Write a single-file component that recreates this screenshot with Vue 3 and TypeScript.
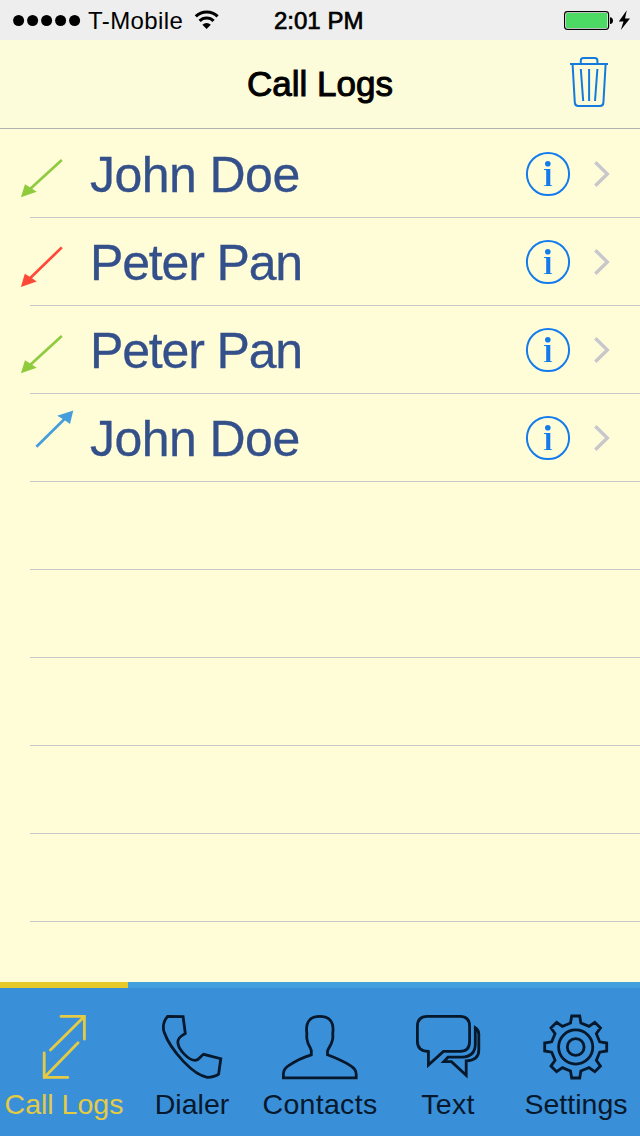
<script setup lang="ts">
type CallKind = 'incoming' | 'missed' | 'outgoing'

interface CallEntry {
  name: string
  kind: CallKind
}

interface Tab {
  id: string
  label: string
}

const calls: CallEntry[] = [
  { name: 'John Doe', kind: 'incoming' },
  { name: 'Peter Pan', kind: 'missed' },
  { name: 'Peter Pan', kind: 'incoming' },
  { name: 'John Doe', kind: 'outgoing' },
]

const emptyRows = 5

const tabs: Tab[] = [
  { id: 'logs', label: 'Call Logs' },
  { id: 'dialer', label: 'Dialer' },
  { id: 'contacts', label: 'Contacts' },
  { id: 'text', label: 'Text' },
  { id: 'settings', label: 'Settings' },
]

const activeTab = 'logs'

// Outline of the eight-toothed settings wheel, centred on (63.7, 59).
function gearPath(): string {
  const tooth: [number, number][] = [
    [-9.3, -22.3],
    [-5.2, -24],
    [-4, -31],
    [4, -31],
    [5.2, -24],
  ]
  const points: string[] = []
  for (let i = 0; i < 8; i++) {
    const a = (i * Math.PI) / 4
    for (const [x, y] of tooth) {
      const px = 63.7 + x * Math.cos(a) - y * Math.sin(a)
      const py = 59 + x * Math.sin(a) + y * Math.cos(a)
      points.push(`${px.toFixed(2)} ${py.toFixed(2)}`)
    }
  }
  return `M${points.join('L')}Z`
}

const gear = gearPath()
</script>

<template>
  <div class="screen">
    <div class="status">
      <div class="carrier">
        <svg class="dots" width="68" height="40" viewBox="0 0 68 40">
          <circle v-for="n in 5" :key="n" :cx="5.6 + (n - 1) * 14" cy="20.5" r="5.5" />
        </svg>
        <span class="network">T-Mobile</span>
        <svg class="wifi" width="26" height="40" viewBox="194 0 26 40">
          <path d="M195.8 16.4a15.4 15.4 0 0 1 21.8 0" />
          <path d="M199.6 20.9a9.8 9.8 0 0 1 14 0" />
          <path class="solid" d="M202.4 24.8a5.8 5.8 0 0 1 8.4 0L206.6 29Z" />
        </svg>
      </div>
      <span class="time">2:01 PM</span>
      <svg class="battery" width="76" height="40" viewBox="564 0 76 40">
        <rect class="case" x="564.6" y="11.6" width="44" height="17.8" rx="2.8" />
        <rect class="charge" x="566" y="13" width="41.4" height="15" rx="1" />
        <path d="M610 17.2c4 0 4 6.8 0 6.8Z" />
        <path d="M626.8 10.2L618.8 21.4H623.5L620.8 30L630 18.6H625Z" />
      </svg>
    </div>

    <header class="header">
      <h1>Call Logs</h1>
      <svg class="trash" width="60" height="88" viewBox="560 40 60 88">
        <path d="M570 64H608" />
        <path d="M580.8 63V60.6Q580.8 58 583.4 58H594.8Q597.4 58 597.4 60.6V63" />
        <path d="M572.6 64.5L574.8 102.6Q575 106 578.4 106H600Q603.2 106 603.4 102.6L605.6 64.5" />
        <path d="M580.8 69L583.2 101M589.1 69V101M597.4 69L595 101" />
      </svg>
    </header>

    <main class="list">
      <div v-for="(call, i) in calls" :key="i" class="row">
        <svg class="direction" :class="call.kind" width="84" height="88" viewBox="0 0 84 88">
          <template v-if="call.kind === 'outgoing'">
            <path class="shaft" d="M36.4 52.8L65.8 23.8" />
            <path class="tip" d="M73.3 16.5L70 29.9L63.8 25.6L57.2 21.8Z" />
          </template>
          <template v-else-if="call.kind === 'missed'">
            <path class="shaft" d="M61.8 29.4L29 61.3" />
            <path class="tip" d="M20.9 68.9L24.8 55.8L31 59.6L36.7 63.6Z" />
          </template>
          <template v-else>
            <path class="shaft" d="M61.8 30L29 60" />
            <path class="tip" d="M20.9 67.3L25 54.2L31 58L36.7 61.7Z" />
          </template>
        </svg>
        <div class="line">
          <span class="name" :class="{ tight: call.name === 'Peter Pan' }">{{ call.name }}</span>
          <svg class="info" width="46" height="46" viewBox="0 0 46 46">
            <circle class="ring" cx="23" cy="23" r="21.1" />
            <circle class="mark" cx="22.8" cy="12.7" r="2.8" />
            <path class="mark" d="M18.9 18H25.3V34.1L27.2 34.4V35.1H18.9V34.4L21.2 34.1V19.2L18.9 18.7Z" />
          </svg>
          <svg class="chevron" width="20" height="32" viewBox="0 0 20 32">
            <path d="M2.3 4.3L14.3 16L2.3 27.7" />
          </svg>
        </div>
      </div>
      <div v-for="n in emptyRows" :key="'e' + n" class="row">
        <div class="line"></div>
      </div>
    </main>

    <nav class="tabs">
      <div v-for="tab in tabs" :key="tab.id" class="tab" :class="[tab.id, { active: tab.id === activeTab }]">
        <svg width="128" height="96" viewBox="0 0 128 96">
          <template v-if="tab.id === 'logs'">
            <path d="M61 28.4H84.4V51.2M84.4 28.4L50.5 62" />
            <path d="M44.2 65V89.4H67.8M44.2 89.4L78.1 54.8" />
          </template>
          <path
            v-else-if="tab.id === 'dialer'"
            d="M39.6 28.4L55.1 28.6L57.3 45.5C51.5 48.5 49.3 51 50 55.5C51 62 60.5 72.4 67.2 72.4C71.5 72.2 72.5 67.8 75.6 66.3L92.8 70.7L90.6 86.2C87.7 88.4 84 89.3 79.3 89.3C72.2 88.2 63 81.4 55.4 73.4C46.7 64 39.2 53.2 36.2 44.3C34.2 38 35.3 33.5 39.6 28.4Z"
          />
          <path
            v-else-if="tab.id === 'contacts'"
            d="M27.4 89.8V86C27.4 82.4 29.3 79.7 32.6 77.6C39.7 72.8 46 69.5 55.3 66.8V62.4C53.8 58 51.8 56.4 51.4 52.8C50 50 51.3 47 50.6 43C50 33.5 54.5 28.3 63.8 28.3S77.6 33.5 77 43C76.3 47 77.6 50 76.2 52.8C75.6 56.4 73.2 58.6 71.5 63V66.8C81 70.4 87.8 73.4 94.4 77.6C97.8 79.7 100.2 82.4 100.2 86V89.8Z"
          />
          <template v-else-if="tab.id === 'text'">
            <path
              d="M43.4 28.4H76Q85.6 28.4 85.6 38.4V53.5Q85.6 63.4 76 63.4H59.4L44.4 77V63.5Q33.4 63 33.4 53.5V38.4Q33.4 28.4 43.4 28.4Z"
            />
            <path
              d="M91.3 39.8Q94.8 42 94.8 46V62Q94.8 72.5 82.2 72.8V87.2L67.5 73.6H59.8L64 69.2H78Q91.3 68.5 91.3 56Z"
            />
          </template>
          <template v-else>
            <path :d="gear" />
            <circle cx="63.7" cy="59" r="17.1" />
            <circle cx="63.7" cy="59" r="8.4" />
          </template>
        </svg>
        <span class="label">{{ tab.label }}</span>
      </div>
    </nav>
  </div>
</template>

<style>
body {
  margin: 0;
}
</style>

<style scoped>
.screen {
  display: flex;
  flex-direction: column;
  width: 640px;
  height: 1136px;
  overflow: hidden;
  background: #fffcd8;
  font-family: 'Liberation Sans', Arial, sans-serif;
  color: #000;
}

svg {
  display: block;
  flex: none;
}

.status {
  display: grid;
  grid-template-columns: 274px 1fr 76px;
  height: 40px;
  background: #eeeeee;
  font-size: 24px;
  line-height: 42px;
}

.carrier {
  display: flex;
  padding-left: 13px;
}

.network {
  width: 106px;
  margin-left: 7px;
  letter-spacing: 0.4px;
  white-space: nowrap;
}

.wifi path {
  fill: none;
  stroke: #000;
  stroke-width: 3;
}

.wifi .solid {
  fill: #000;
  stroke: none;
}

.time {
  -webkit-text-stroke: 0.7px #000;
}

.battery .case {
  fill: #fff;
  stroke: #000;
  stroke-width: 1.2;
}

.battery .charge {
  fill: #4cd964;
}

.header {
  display: grid;
  grid-template-columns: 80px 1fr 80px;
  height: 88px;
  border-bottom: 1px solid #b2b2b5;
  background: #fcfbda;
}

h1 {
  grid-column: 2;
  margin: 0;
  font-size: 35px;
  font-weight: 400;
  line-height: 88px;
  text-align: center;
  -webkit-text-stroke: 1px #000;
}

.trash path {
  fill: none;
  stroke: #147bdc;
  stroke-width: 2;
}

.list {
  flex: 1;
  padding-top: 1px;
}

.row {
  display: flex;
  justify-content: flex-end;
  height: 88px;
}

.direction {
  margin-right: -54px;
}

.shaft {
  fill: none;
  stroke: currentColor;
  stroke-width: 2.7;
}

.tip {
  fill: currentColor;
}

.incoming {
  color: #8fcb3d;
}

.missed {
  color: #ff4938;
}

.outgoing {
  color: #459edb;
}

.line {
  display: flex;
  align-items: center;
  box-sizing: border-box;
  width: 610px;
  height: 88px;
  border-bottom: 1px solid #c8c7cc;
}

.name {
  width: 435px;
  margin-left: 60px;
  padding-top: 2px;
  color: #34508a;
  font-size: 50px;
  letter-spacing: -0.55px;
  line-height: 60px;
  white-space: nowrap;
  -webkit-text-stroke: 0.3px #34508a;
}

.name.tight {
  letter-spacing: -1.15px;
}

.ring {
  fill: none;
  stroke: #147bed;
  stroke-width: 2;
}

.mark {
  fill: #147bed;
}

.chevron {
  margin-left: 22px;
}

.chevron path {
  fill: none;
  stroke: #c7c7cc;
  stroke-width: 3.4;
}

.tabs {
  display: grid;
  grid-template-columns: repeat(5, 128px);
  height: 154px;
  background: #3a8fd9;
}

.tab {
  box-sizing: border-box;
  border-top: 6px solid #43a0dd;
  color: #06182b;
}

.tab.active {
  border-top-color: #e8c92c;
  color: #e4cb43;
}

.tab svg path,
.tab svg circle {
  fill: none;
  stroke: currentColor;
  stroke-width: 2.8;
}

.tab.logs svg path {
  stroke-linecap: round;
}

.label {
  display: block;
  margin-top: 3px;
  font-size: 28.5px;
  line-height: 34px;
  text-align: center;
  letter-spacing: 0.3px;
  white-space: nowrap;
}

.logs .label,
.dialer .label,
.settings .label {
  letter-spacing: 0;
}
</style>
